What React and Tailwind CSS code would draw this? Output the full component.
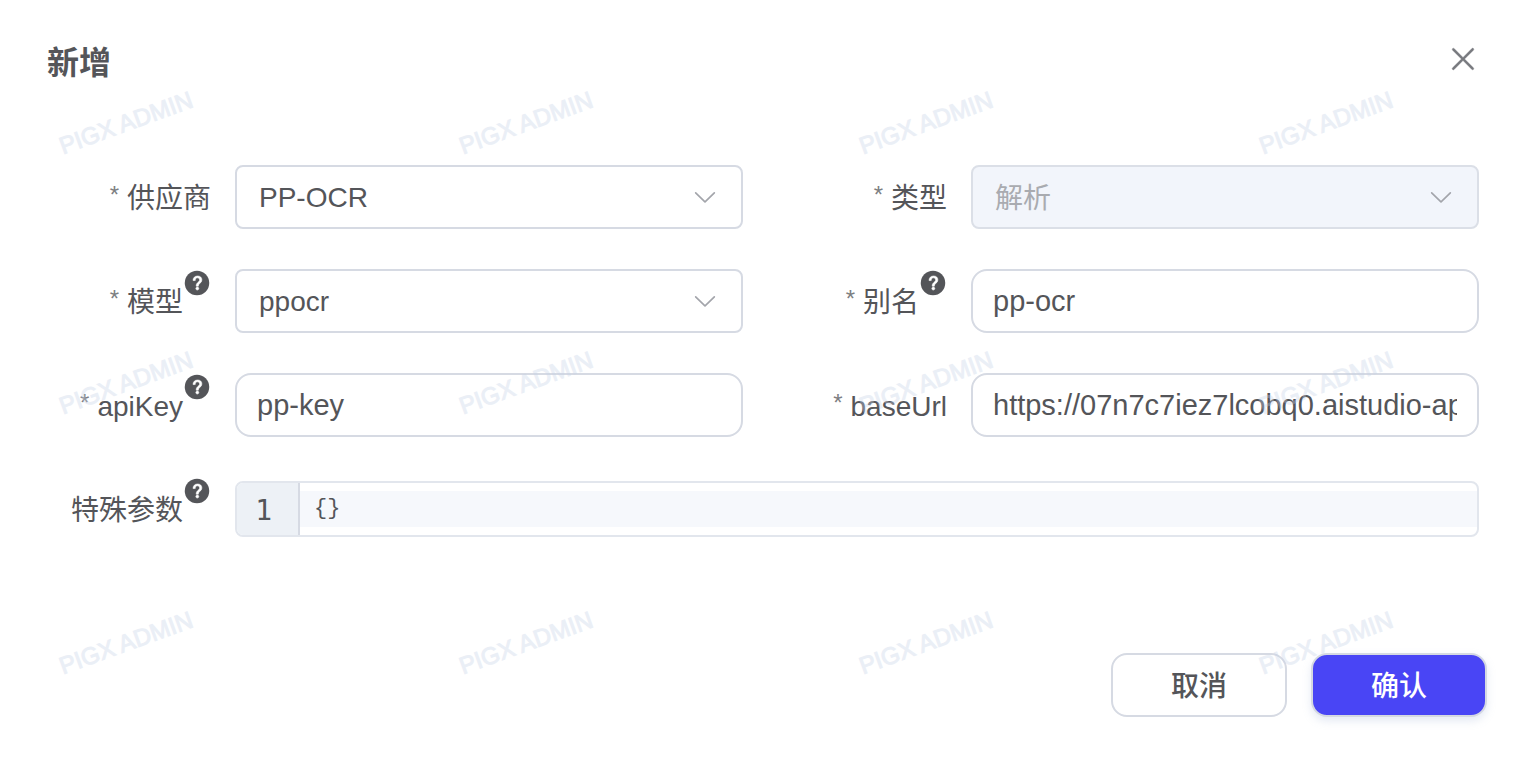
import { useId, useState } from 'react'

const WATERMARK_TILES = Array.from({ length: 12 }, (_, i) => i)

function QuestionIcon() {
  return (
    <svg viewBox="0 0 1024 1024" className="size-7 shrink-0" aria-hidden="true">
      <circle cx="512" cy="512" r="448" fill="currentColor" />
      <path
        fill="white"
        stroke="white"
        strokeWidth="20"
        d="M535.744 255.488c-52.096 0-92.928 14.784-123.2 44.352-30.976 29.568-45.76 70.4-45.76 122.496h80.256c0-29.568 5.632-52.8 17.6-68.992 13.376-19.712 35.2-28.864 66.176-28.864 23.936 0 42.944 6.336 56.32 19.712 12.672 13.376 19.712 31.68 19.712 54.912 0 17.6-6.336 34.496-19.008 49.984l-8.448 9.856c-45.76 40.832-73.216 70.4-82.368 89.408-9.856 19.008-14.08 42.24-14.08 68.992v9.856h80.96v-9.856c0-16.896 3.52-31.68 10.56-45.76 6.336-12.672 15.488-24.64 28.16-35.2 33.792-29.568 54.208-48.576 60.544-55.616 16.896-22.528 26.048-51.392 26.048-86.592 0-42.944-14.08-76.736-42.24-101.376-28.16-25.344-65.472-37.312-111.232-37.312zm-12.672 406.208a54.272 54.272 0 0 0-38.72 14.784 49.408 49.408 0 0 0-15.488 38.016c0 15.488 4.928 28.16 15.488 38.016A54.848 54.848 0 0 0 523.072 768c15.488 0 28.16-4.928 38.72-14.784a51.52 51.52 0 0 0 16.192-38.72 51.968 51.968 0 0 0-15.488-38.016 55.936 55.936 0 0 0-39.424-14.784z"
      />
    </svg>
  )
}

function ArrowDownIcon({ className = '' }) {
  return (
    <svg viewBox="0 0 1024 1024" fill="currentColor" className={`size-7 ${className}`} aria-hidden="true">
      <path d="M831.872 340.864 512 652.672 192.128 340.864a30.592 30.592 0 0 0-42.752 0 29.12 29.12 0 0 0 0 41.6L489.664 714.24a32 32 0 0 0 44.672 0l340.288-331.712a29.12 29.12 0 0 0 0-41.728 30.592 30.592 0 0 0-42.752 0z" />
    </svg>
  )
}

function CloseIcon() {
  return (
    <svg viewBox="0 0 1024 1024" fill="currentColor" stroke="currentColor" strokeWidth="10" className="size-9" aria-hidden="true">
      <path d="M764.288 214.592 512 466.88 259.712 214.592a31.936 31.936 0 0 0-45.12 45.12L466.752 512 214.528 764.224a31.936 31.936 0 1 0 45.12 45.184L512 557.184l252.288 252.288a31.936 31.936 0 0 0 45.12-45.12L557.12 512.064l252.288-252.352a31.936 31.936 0 1 0-45.12-45.184z" />
    </svg>
  )
}

function FormItem({ id, label, required, help, className = '', children }) {
  return (
    <div className={`flex h-16 items-center ${className}`}>
      <label htmlFor={id} className="flex h-16 w-[228px] shrink-0 justify-end pr-6 leading-16">
        {required && <span className="mr-2 text-2xl leading-15 text-[#7d7e82]">*</span>}
        <span className="pt-0.5">{label}</span>
        {help && <QuestionIcon />}
      </label>
      <div className="min-w-0 flex-1">{children}</div>
    </div>
  )
}

function SelectField({ label, options, disabled, ...item }) {
  const id = useId()
  return (
    <FormItem id={id} label={label} {...item}>
      <div className="relative">
        <select
          id={id}
          disabled={disabled}
          className="block h-16 w-full appearance-none rounded-lg border-2 border-[#d6dae3] bg-white pl-[22px] pr-14 pt-0.5 focus:border-[#4945f5] focus:outline-none disabled:border-[#dbdfe7] disabled:bg-[#f2f5fb] disabled:pt-1 disabled:text-[#a9abb0] disabled:opacity-100"
        >
          {options.map((option) => (
            <option key={option}>{option}</option>
          ))}
        </select>
        <ArrowDownIcon className="pointer-events-none absolute right-6 top-[18px] text-[#a3a5ab]" />
      </div>
    </FormItem>
  )
}

function InputField({ label, value, onChange, ...item }) {
  const id = useId()
  return (
    <FormItem id={id} label={label} {...item}>
      <input
        id={id}
        type="text"
        value={value}
        onChange={(e) => onChange(e.target.value)}
        className="block h-16 w-full rounded-2xl border-2 border-[#d6dae3] bg-white px-5 text-[29px] focus:border-[#4945f5] focus:outline-none"
      />
    </FormItem>
  )
}

function CodeField({ label, value, onChange, ...item }) {
  const id = useId()
  return (
    <FormItem id={id} label={label} {...item}>
      <div className="flex h-14 overflow-hidden rounded-lg border-2 border-[#e2e6ed] bg-white">
        <div className="flex w-[63px] items-center justify-end border-r-2 border-[#d6dae3] bg-[#edf1f6] pr-[26px] pt-1 font-['DejaVu_Sans_Mono',monospace]">
          1
        </div>
        <textarea
          id={id}
          rows={1}
          value={value}
          spellCheck={false}
          onChange={(e) => onChange(e.target.value)}
          className="my-2 block h-9 flex-1 resize-none overflow-hidden bg-[#f6f8fc] px-3.5 font-['Liberation_Mono',monospace] text-[22px] leading-9 focus:outline-none"
        />
      </div>
    </FormItem>
  )
}

function Watermark() {
  return (
    <div
      className="pointer-events-none absolute inset-0 grid auto-rows-[260px] grid-cols-[repeat(4,400px)] overflow-hidden text-2xl leading-6 text-[#c6d2e8] opacity-35 [-webkit-text-stroke:1px_#c6d2e8]"
      aria-hidden="true"
    >
      {WATERMARK_TILES.map((tile) => (
        <div key={tile} className="pl-14 pt-[111px]">
          <span className="inline-block -rotate-[20deg] whitespace-nowrap">PIGX ADMIN</span>
        </div>
      ))}
    </div>
  )
}

export default function App() {
  const [form, setForm] = useState({
    alias: 'pp-ocr',
    apiKey: 'pp-key',
    baseUrl: 'https://07n7c7iez7lcobq0.aistudio-app.com',
    params: '{}',
  })
  const update = (key) => (value) => setForm((prev) => ({ ...prev, [key]: value }))

  return (
    <main className="relative min-h-screen bg-white font-['Liberation_Sans','Noto_Sans_CJK_SC',sans-serif] text-[28px] text-[#545559]">
      <header className="flex items-start justify-between pl-[47px] pr-[33px] pt-[41px]">
        <h1 className="text-[32px] font-bold leading-11">新增</h1>
        <button type="button" aria-label="关闭" className="text-[#77797e]">
          <CloseIcon />
        </button>
      </header>

      <form id="model-form" className="pl-[7px] pr-[35px] pt-20" onSubmit={(e) => e.preventDefault()}>
        <div className="grid grid-cols-2 gap-y-10">
          <SelectField label="供应商" required options={['PP-OCR']} />
          <SelectField label="类型" required disabled options={['解析']} />
          <SelectField label="模型" required help options={['ppocr']} />
          <InputField label="别名" required help value={form.alias} onChange={update('alias')} />
          <InputField label="apiKey" required help value={form.apiKey} onChange={update('apiKey')} />
          <InputField label="baseUrl" required value={form.baseUrl} onChange={update('baseUrl')} />
          <CodeField label="特殊参数" help className="col-span-2" value={form.params} onChange={update('params')} />
        </div>
      </form>

      <footer className="flex justify-end gap-6 pb-11 pr-[27px] pt-28">
        <button type="button" className="h-16 w-44 rounded-2xl border-2 border-[#d6dae3] bg-white pt-1 font-medium">
          取消
        </button>
        <button
          type="submit"
          form="model-form"
          className="h-16 w-44 rounded-2xl border-2 border-[#d5d9e2] bg-[#4945f5] pt-1 font-medium text-white shadow-[0_4px_8px_rgba(150,170,210,0.25)]"
        >
          确认
        </button>
      </footer>

      <Watermark />
    </main>
  )
}
